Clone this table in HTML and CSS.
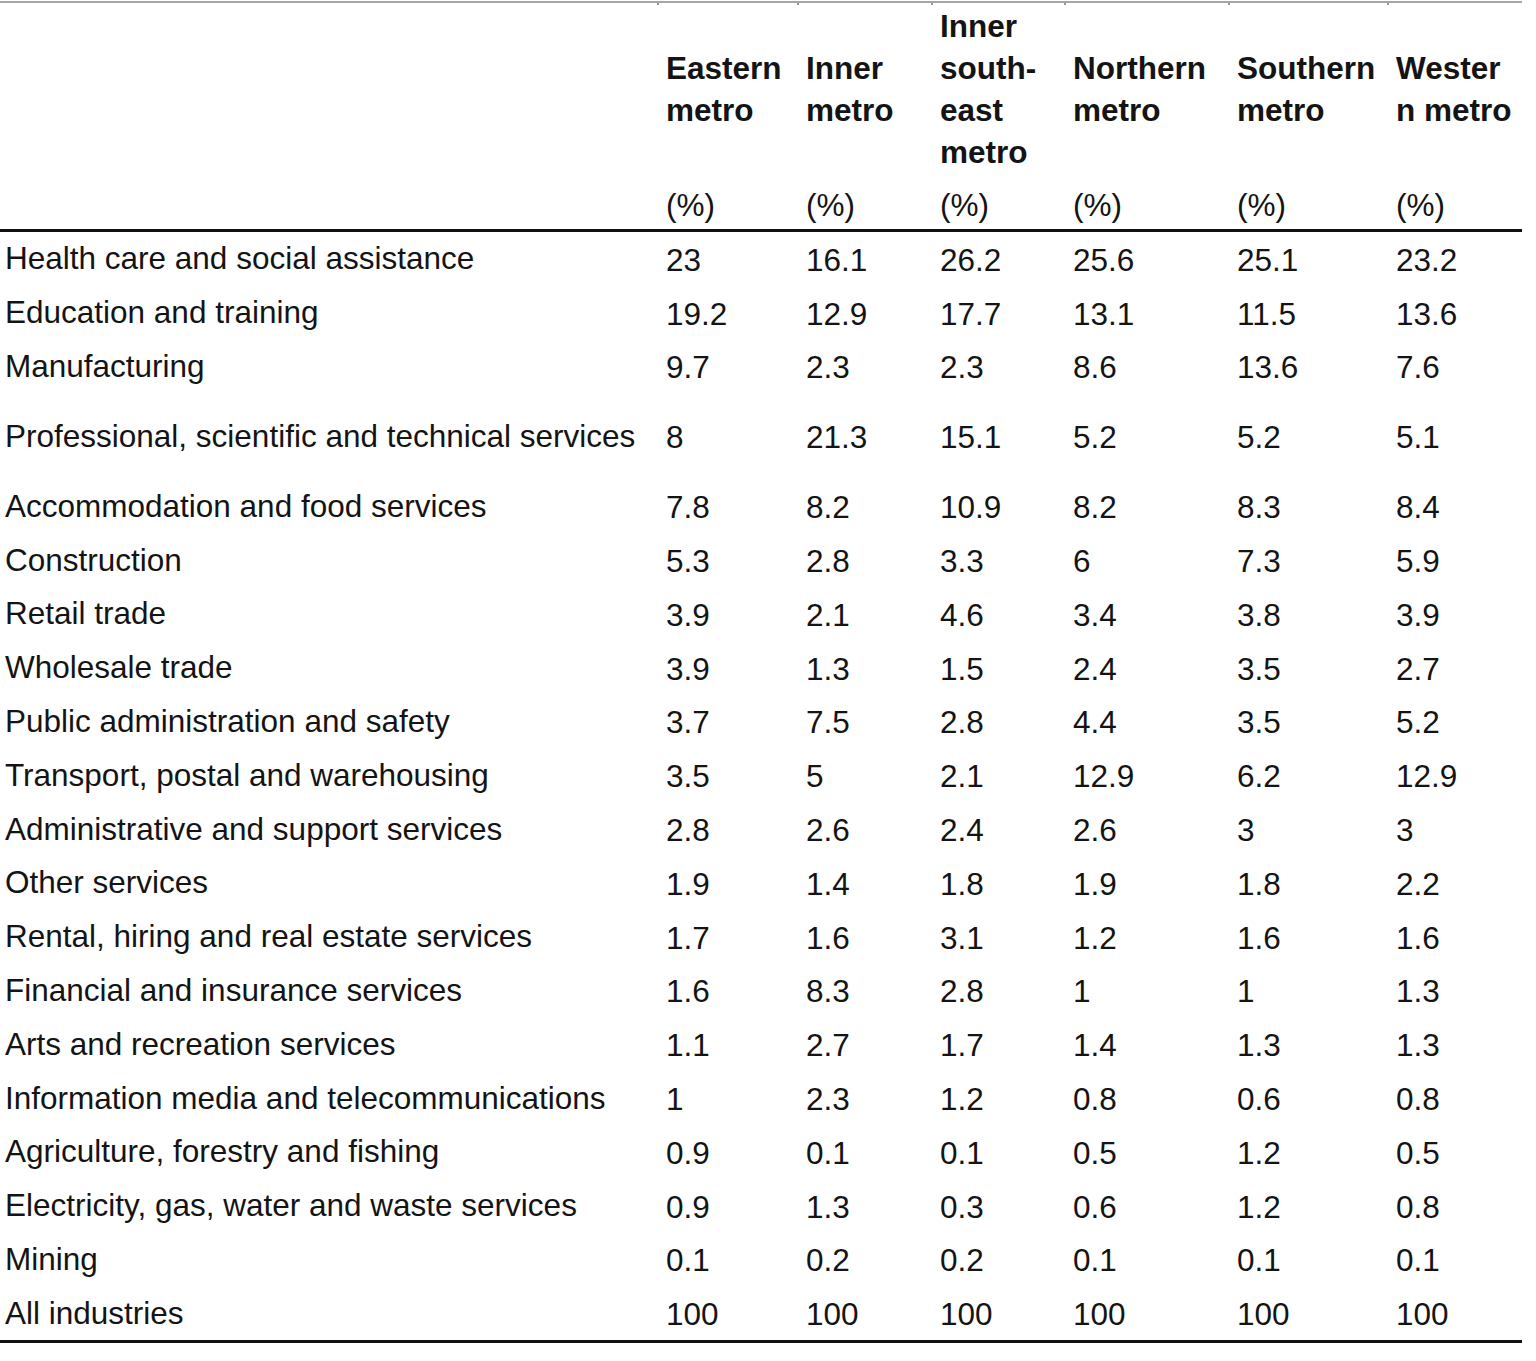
FILE: index.html
```html
<!DOCTYPE html>
<html lang="en">
<head>
<meta charset="utf-8">
<title>Industry share by metro region</title>
<link rel="stylesheet" href="styles.css">
</head>
<body>
<div class="table">
  <div class="grid ticks">
    <span class="tick"></span><span class="tick"></span><span class="tick"></span><span class="tick"></span><span class="tick"></span><span class="tick"></span><span class="tick"></span>
  </div>
  <div class="grid head">
    <div class="hcell first"></div>
    <div class="hcell"><span class="hl">Eastern<br>metro</span><span class="pct">(%)</span></div>
    <div class="hcell"><span class="hl">Inner<br>metro</span><span class="pct">(%)</span></div>
    <div class="hcell"><span class="hl">Inner<br>south-<br>east<br>metro</span><span class="pct">(%)</span></div>
    <div class="hcell"><span class="hl">Northern<br>metro</span><span class="pct">(%)</span></div>
    <div class="hcell"><span class="hl">Southern<br>metro</span><span class="pct">(%)</span></div>
    <div class="hcell"><span class="hl">Wester<br>n metro</span><span class="pct">(%)</span></div>
  </div>
  <div class="grid row"><div class="lab">Health care and social assistance</div><div class="num">23</div><div class="num">16.1</div><div class="num">26.2</div><div class="num">25.6</div><div class="num">25.1</div><div class="num">23.2</div></div>
  <div class="grid row"><div class="lab">Education and training</div><div class="num">19.2</div><div class="num">12.9</div><div class="num">17.7</div><div class="num">13.1</div><div class="num">11.5</div><div class="num">13.6</div></div>
  <div class="grid row"><div class="lab">Manufacturing</div><div class="num">9.7</div><div class="num">2.3</div><div class="num">2.3</div><div class="num">8.6</div><div class="num">13.6</div><div class="num">7.6</div></div>
  <div class="grid row tall"><div class="lab">Professional, scientific and technical services</div><div class="num">8</div><div class="num">21.3</div><div class="num">15.1</div><div class="num">5.2</div><div class="num">5.2</div><div class="num">5.1</div></div>
  <div class="grid row"><div class="lab">Accommodation and food services</div><div class="num">7.8</div><div class="num">8.2</div><div class="num">10.9</div><div class="num">8.2</div><div class="num">8.3</div><div class="num">8.4</div></div>
  <div class="grid row"><div class="lab">Construction</div><div class="num">5.3</div><div class="num">2.8</div><div class="num">3.3</div><div class="num">6</div><div class="num">7.3</div><div class="num">5.9</div></div>
  <div class="grid row"><div class="lab">Retail trade</div><div class="num">3.9</div><div class="num">2.1</div><div class="num">4.6</div><div class="num">3.4</div><div class="num">3.8</div><div class="num">3.9</div></div>
  <div class="grid row"><div class="lab">Wholesale trade</div><div class="num">3.9</div><div class="num">1.3</div><div class="num">1.5</div><div class="num">2.4</div><div class="num">3.5</div><div class="num">2.7</div></div>
  <div class="grid row"><div class="lab">Public administration and safety</div><div class="num">3.7</div><div class="num">7.5</div><div class="num">2.8</div><div class="num">4.4</div><div class="num">3.5</div><div class="num">5.2</div></div>
  <div class="grid row"><div class="lab">Transport, postal and warehousing</div><div class="num">3.5</div><div class="num">5</div><div class="num">2.1</div><div class="num">12.9</div><div class="num">6.2</div><div class="num">12.9</div></div>
  <div class="grid row"><div class="lab">Administrative and support services</div><div class="num">2.8</div><div class="num">2.6</div><div class="num">2.4</div><div class="num">2.6</div><div class="num">3</div><div class="num">3</div></div>
  <div class="grid row"><div class="lab">Other services</div><div class="num">1.9</div><div class="num">1.4</div><div class="num">1.8</div><div class="num">1.9</div><div class="num">1.8</div><div class="num">2.2</div></div>
  <div class="grid row"><div class="lab">Rental, hiring and real estate services</div><div class="num">1.7</div><div class="num">1.6</div><div class="num">3.1</div><div class="num">1.2</div><div class="num">1.6</div><div class="num">1.6</div></div>
  <div class="grid row"><div class="lab">Financial and insurance services</div><div class="num">1.6</div><div class="num">8.3</div><div class="num">2.8</div><div class="num">1</div><div class="num">1</div><div class="num">1.3</div></div>
  <div class="grid row"><div class="lab">Arts and recreation services</div><div class="num">1.1</div><div class="num">2.7</div><div class="num">1.7</div><div class="num">1.4</div><div class="num">1.3</div><div class="num">1.3</div></div>
  <div class="grid row"><div class="lab">Information media and telecommunications</div><div class="num">1</div><div class="num">2.3</div><div class="num">1.2</div><div class="num">0.8</div><div class="num">0.6</div><div class="num">0.8</div></div>
  <div class="grid row"><div class="lab">Agriculture, forestry and fishing</div><div class="num">0.9</div><div class="num">0.1</div><div class="num">0.1</div><div class="num">0.5</div><div class="num">1.2</div><div class="num">0.5</div></div>
  <div class="grid row"><div class="lab">Electricity, gas, water and waste services</div><div class="num">0.9</div><div class="num">1.3</div><div class="num">0.3</div><div class="num">0.6</div><div class="num">1.2</div><div class="num">0.8</div></div>
  <div class="grid row"><div class="lab">Mining</div><div class="num">0.1</div><div class="num">0.2</div><div class="num">0.2</div><div class="num">0.1</div><div class="num">0.1</div><div class="num">0.1</div></div>
  <div class="grid row"><div class="lab">All industries</div><div class="num">100</div><div class="num">100</div><div class="num">100</div><div class="num">100</div><div class="num">100</div><div class="num">100</div></div>
</div>
</body>
</html>
```
FILE: styles.css
```css
html, body {
  margin: 0;
  padding: 0;
  background: #ffffff;
}

body {
  font-family: "Liberation Sans", Arial, sans-serif;
  font-size: 31.5px;
  color: #141414;
}

.table {
  width: 1522px;
  border-bottom: 3px solid #111111;
}

.grid {
  display: grid;
  grid-template-columns: 657px 140px 134px 133px 164px 159px 135px;
}

.ticks {
  margin-top: 1px;
  height: 2px;
  border-top: 2px solid #a6a6a6;
}

.tick {
  border-left: 2px solid #9a9a9a;
}

.tick:first-child {
  border-left: none;
}

.head {
  border-bottom: 3px solid #111111;
}

.hcell {
  display: flex;
  flex-direction: column;
  padding: 0 0 3px 9px;
  line-height: 42px;
}

.hcell.first {
  padding-left: 5px;
}

.hl {
  font-weight: bold;
  white-space: nowrap;
  margin: auto 0;
}

.pct {
  margin-top: 11px;
}

.row {
  height: 53.8px;
  align-items: center;
}

.row.tall {
  height: 86px;
}

.lab {
  padding-left: 5px;
  white-space: nowrap;
}

.num {
  padding: 3px 0 0 9px;
  white-space: nowrap;
}
```
